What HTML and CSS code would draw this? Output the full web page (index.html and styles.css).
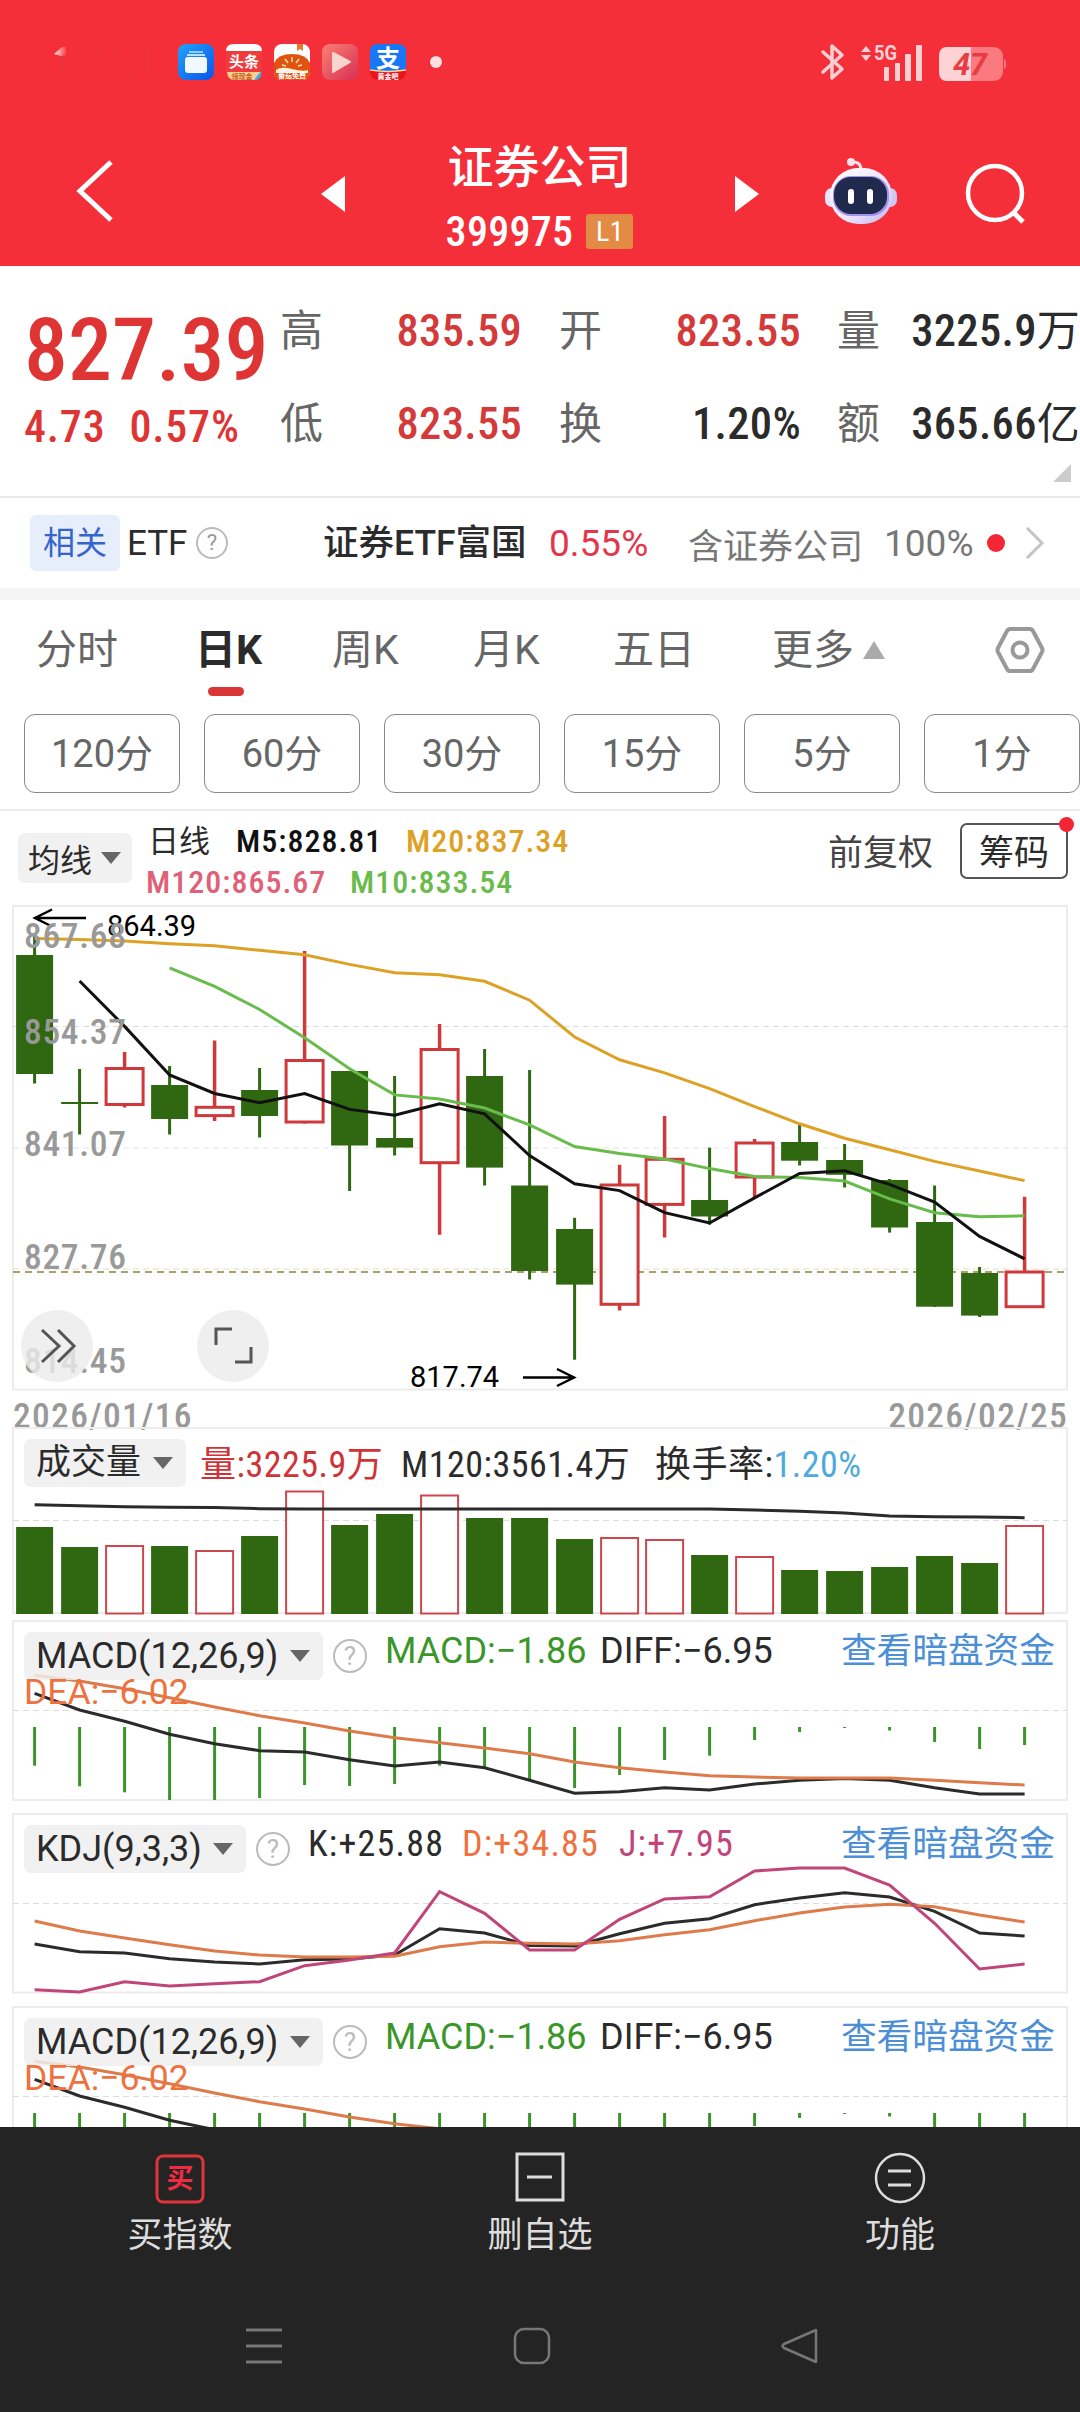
FILE: index.html
```html
<!DOCTYPE html>
<html lang="zh-CN">
<head>
    <meta charset="UTF-8">
    <meta name="viewport" content="width=device-width, initial-scale=1.0">
    <title>证券公司 399975</title>
    <link rel="stylesheet" href="styles.css">
</head>
<body>
    <header class="header">
        <div class="status">
            <svg class="clock" width="110" height="40" viewBox="0 0 110 40"><defs><linearGradient id="fade"><stop offset="0" stop-color="#fff" stop-opacity=".9"/><stop offset="1" stop-color="#fff" stop-opacity=".1"/></linearGradient></defs><path d="M0 12L8 5H12V13L7 14Z" fill="url(#fade)"/><path d="M9 12V34M23 7V10M40 5L48 12M61 5V10M70 33H80M86 5L94 9V30" stroke="#c94a50" stroke-width="2" fill="none" opacity=".3"/></svg>
            <div class="apps">
                <svg viewBox="0 0 36 36"><defs><linearGradient id="blue" x1="0" y1="0" x2="1" y2="1"><stop offset="0" stop-color="#20a2fb"/><stop offset="1" stop-color="#0b54e8"/></linearGradient></defs><rect width="36" height="36" rx="8" fill="url(#blue)"/><path d="M11 8H25" stroke="#8fd0ff" stroke-width="2"/><path d="M9 11H27" stroke="#b9e2ff" stroke-width="2"/><rect x="7" y="13" width="22" height="16" rx="3" fill="#f1f8ff"/></svg>
                <svg viewBox="0 0 36 36"><rect width="36" height="36" rx="8" fill="#f03b3d"/><path d="M0 7Q0 0 8 0H28Q36 0 36 7Z" fill="#fff"/><text x="18" y="23" class="app-text" font-size="15">头条</text><path d="M1 28H35Q34 36 28 36H8Q2 36 1 28Z" fill="#f8cf8c"/><path d="M28 36L35 27V31Q34 36 28 36Z" fill="#28b7e8"/><text x="16" y="34.500" text-anchor="middle" font-size="7" font-weight="700" fill="#c65a23">领现金</text></svg>
                <svg viewBox="0 0 36 36"><rect width="36" height="36" rx="8" fill="#fff"/><path d="M23 0H29V7L26 5L23 7Z" fill="#e9762c"/><path d="M0 19Q4 10 18 10T36 19V28Q36 36 28 36H8Q0 36 0 28Z" fill="#e0520f"/><path d="M2 26Q7 22 18 25T34 26V29H2Z" fill="#fff2dd"/><path d="M18 13V18M11 15L14 19M25 15L22 19M8 21L12 22M28 21L24 22" stroke="#ffe3a6" stroke-width="1.500"/><text x="18" y="34" class="app-text" font-size="7">番茄免费</text></svg>
                <svg viewBox="0 0 36 36"><defs><linearGradient id="rose" x1="0" y1="0" x2="1" y2="1"><stop offset="0" stop-color="#fb8072"/><stop offset="1" stop-color="#d72f55"/></linearGradient></defs><rect width="36" height="36" rx="8" fill="url(#rose)"/><path d="M11 9L28 18L11 28Z" fill="#fbd4cf" stroke="#fbd4cf" stroke-width="2" stroke-linejoin="round"/></svg>
                <svg viewBox="0 0 36 36"><rect width="36" height="36" rx="8" fill="#e8141e"/><path d="M0 26V8Q0 0 8 0H28Q36 0 36 8V26Q18 29 0 26Z" fill="#1777f5"/><text x="18" y="23" class="app-text" font-size="24">支</text><path d="M0 26Q18 29 36 26" fill="none" stroke="#ffd58e" stroke-width="1.500"/><text x="18" y="34.500" class="app-text" font-size="7">黄金吧</text></svg>
            </div>
            <i class="status-dot"></i>
            <svg class="signals" width="190" height="40" viewBox="0 0 190 40"><path d="M3 10L22 27L12 36V4L22 13L3 30" fill="none" stroke="#fcd0d2" stroke-width="3.500" stroke-linejoin="round" stroke-linecap="round"/><g fill="#fcd0d2"><path d="M41 10L46 4L51 10Z"/><path d="M41 13L46 19L51 13Z"/><rect x="64" y="25" width="5" height="14" rx="1"/><rect x="75" y="21" width="5" height="18" rx="1"/><rect x="85" y="12" width="6" height="27" rx="1"/><rect x="96" y="3" width="6" height="36" rx="1"/><text x="54" y="18" font-size="20" font-weight="700" textLength="23" lengthAdjust="spacingAndGlyphs">5G</text></g><rect x="119" y="5" width="64" height="34" rx="9" fill="#fa7a80"/><path d="M184 17Q186 17 186 22T184 27Z" fill="#fa7a80"/><path d="M151 5V39H127Q119 39 119 30V14Q119 5 127 5Z" fill="#fdd3d5"/><text x="133" y="33" font-size="31" font-weight="700" font-style="italic" fill="#e83c44" textLength="34">47</text></svg>
        </div>
        <div class="nav">
            <svg class="back" width="44" height="66" viewBox="0 0 44 66"><path d="M37 4L6 33L37 62" fill="none" stroke="#fff" stroke-width="5"/></svg>
            <svg class="prev" width="24" height="36" viewBox="0 0 24 36"><path d="M24 0V36L0 18Z" fill="#fff"/></svg>
            <div class="title">
                <h1>证券公司</h1>
                <div class="code"><span>399975</span><b>L1</b></div>
            </div>
            <svg class="next" width="24" height="36" viewBox="0 0 24 36"><path d="M0 0V36L24 18Z" fill="#fff"/></svg>
            <svg class="robot" width="74" height="68" viewBox="0 0 74 68"><defs><linearGradient id="shell" x1="0" y1="0" x2="1" y2="1"><stop offset="0" stop-color="#fff"/><stop offset=".6" stop-color="#efe3fb"/><stop offset="1" stop-color="#b9b6f2"/></linearGradient></defs><path d="M27 5Q37 4 37 13" fill="none" stroke="#fbe3ec" stroke-width="3"/><circle cx="27" cy="5" r="4" fill="#fbe3ec"/><rect x="1" y="31" width="14" height="19" rx="7" fill="#e9e4fb"/><rect x="59" y="31" width="14" height="19" rx="7" fill="#cfc8f5"/><rect x="6" y="11" width="62" height="56" rx="28" fill="url(#shell)"/><rect x="9" y="19" width="56" height="40" rx="18" fill="#a493ee"/><rect x="10" y="20" width="53" height="37" rx="17" fill="#1f2a4d"/><rect x="24" y="32" width="6" height="15" rx="3" fill="#fff"/><rect x="43" y="32" width="6" height="15" rx="3" fill="#fff"/></svg>
            <svg class="search" width="64" height="64" viewBox="0 0 64 64"><circle cx="30" cy="31" r="27" fill="none" stroke="#fff" stroke-width="4.500"/><path d="M48 50L58 60" stroke="#fff" stroke-width="5"/></svg>
        </div>
    </header>

    <section class="quote">
        <div class="price">
            <strong>827.39</strong>
            <p><span>4.73</span><span>0.57%</span></p>
        </div>
        <dl class="stats">
            <dt>高</dt><dd class="up">835.59</dd><dt>开</dt><dd class="up">823.55</dd><dt>量</dt><dd>3225.9<em>万</em></dd>
            <dt>低</dt><dd class="up">823.55</dd><dt>换</dt><dd>1.20%</dd><dt>额</dt><dd>365.66<em>亿</em></dd>
        </dl>
        <i class="corner"></i>
    </section>

    <section class="etf">
        <span class="tag">相关</span>
        <span class="etf-label">ETF</span>
        <i class="help small">?</i>
        <span class="etf-name">证券ETF富国</span>
        <span class="etf-rate">0.55%</span>
        <span class="etf-hold">含证券公司</span>
        <span class="etf-pct">100%</span>
        <i class="dot"></i>
        <svg width="20" height="34" viewBox="0 0 20 34"><path d="M2 2L17 17L2 32" fill="none" stroke="#c4c4c4" stroke-width="3"/></svg>
    </section>

    <nav class="tabs">
        <span>分时</span>
        <span class="active">日K</span>
        <span>周K</span>
        <span>月K</span>
        <span>五日</span>
        <span class="more">更多<i></i></span>
        <svg width="50" height="48" viewBox="0 0 50 48"><path d="M15 3H35Q37 3 38 5L47 22Q48 24 47 26L38 43Q37 45 35 45H15Q13 45 12 43L3 26Q2 24 3 22L12 5Q13 3 15 3Z" fill="none" stroke="#999" stroke-width="4"/><circle cx="25" cy="24" r="7.500" fill="none" stroke="#999" stroke-width="4"/></svg>
    </nav>

    <div class="periods">
        <span>120分</span><span>60分</span><span>30分</span><span>15分</span><span>5分</span><span>1分</span>
    </div>

    <section class="ma">
        <span class="chip">均线<i></i></span>
        <div class="ma-values">
            <div><span class="day">日线</span><span class="m5">M5:828.81</span><span class="m20">M20:837.34</span></div>
            <div><span class="m120">M120:865.67</span><span class="m10">M10:833.54</span></div>
        </div>
        <span class="adjust">前复权</span>
        <span class="chips-btn">筹码<i></i></span>
    </section>

    <svg id="kline" width="1080" height="486" viewBox="0 905 1080 486"></svg>
    <div class="dates"><span>2026/01/16</span><span>2026/02/25</span></div>

    <section class="panel volume">
        <svg id="volume" width="1080" height="188" viewBox="0 1427 1080 188"></svg>
        <div class="panel-head">
            <span class="chip">成交量<i></i></span>
            <span class="vol-now">量:3225.9万</span>
            <span class="vol-ma">M120:3561.4万</span>
            <span class="vol-rate">换手率:<em>1.20%</em></span>
        </div>
    </section>

    <section class="panel macd">
        <svg class="macd-chart" width="1080" height="181" viewBox="0 1620 1080 181"></svg>
        <div class="panel-head">
            <span class="chip">MACD(12,26,9)<i></i></span>
            <i class="help">?</i>
            <span class="macd-val">MACD:−1.86</span>
            <span class="diff-val">DIFF:−6.95</span>
            <a>查看暗盘资金</a>
        </div>
        <span class="dea-val">DEA:−6.02</span>
    </section>

    <section class="panel kdj">
        <svg id="kdj" width="1080" height="181" viewBox="0 1813 1080 181"></svg>
        <div class="panel-head">
            <span class="chip">KDJ(9,3,3)<i></i></span>
            <i class="help">?</i>
            <span class="k-val">K:+25.88</span>
            <span class="d-val">D:+34.85</span>
            <span class="j-val">J:+7.95</span>
            <a>查看暗盘资金</a>
        </div>
    </section>

    <section class="panel macd">
        <svg class="macd-chart" width="1080" height="181" viewBox="0 1620 1080 181"></svg>
        <div class="panel-head">
            <span class="chip">MACD(12,26,9)<i></i></span>
            <i class="help">?</i>
            <span class="macd-val">MACD:−1.86</span>
            <span class="diff-val">DIFF:−6.95</span>
            <a>查看暗盘资金</a>
        </div>
        <span class="dea-val">DEA:−6.02</span>
    </section>

    <footer class="footer">
        <div class="actions">
            <div class="action">
                <svg width="52" height="52" viewBox="0 0 52 52"><rect x="3" y="4" width="46" height="46" rx="6" fill="none" stroke="#e0343c" stroke-width="3"/><text x="26" y="36" text-anchor="middle" font-size="27" font-weight="700" fill="#f02c43">买</text></svg>
                <span>买指数</span>
            </div>
            <div class="action">
                <svg width="52" height="52" viewBox="0 0 52 52"><rect x="3" y="2" width="46" height="46" fill="none" stroke="#ddd" stroke-width="3"/><path d="M13 25H38" stroke="#ddd" stroke-width="3"/></svg>
                <span>删自选</span>
            </div>
            <div class="action">
                <svg width="52" height="52" viewBox="0 0 52 52"><circle cx="26" cy="26" r="24" fill="none" stroke="#ddd" stroke-width="2.500"/><path d="M14 19H37M14 33H37" stroke="#ddd" stroke-width="3"/></svg>
                <span>功能</span>
            </div>
        </div>
        <div class="system">
            <svg width="40" height="40" viewBox="0 0 40 40"><path d="M2 4H38M2 20H38M2 36H38" stroke="#777" stroke-width="3"/></svg>
            <svg width="40" height="40" viewBox="0 0 40 40"><rect x="4" y="3" width="34" height="34" rx="9" fill="none" stroke="#777" stroke-width="2.500"/></svg>
            <svg width="40" height="40" viewBox="0 0 40 40"><path d="M38 4V36L6 22Q3 20 6 18Z" fill="none" stroke="#777" stroke-width="2.500" stroke-linejoin="round"/></svg>
        </div>
    </footer>

    <script src="charts.js"></script>
</body>
</html>
```

FILE: charts.js
```js
const GREEN = '#306812';
const RED = '#d0393c';
const x = i => 34.6 + 45 * i;

function line(values, color, start = 0, width = 3) {
    const points = values.map((v, i) => x(i + start).toFixed(1) + ',' + v).join(' ');
    return `<polyline points="${points}" fill="none" stroke="${color}" stroke-width="${width}"/>`;
}

function frame(top, bottom) {
    return `<rect x="13" y="${top}" width="1054" height="${bottom - top}" fill="none" stroke="#ececec" stroke-width="2"/>`;
}

function grid(y, color = '#dcdcdc', dash = '6 4', width = 1) {
    return `<line x1="13" x2="1067" y1="${y}" y2="${y}" stroke="${color}" stroke-width="${width}" stroke-dasharray="${dash}"/>`;
}

// [涨跌, 最高, 最低, 实体上沿, 实体下沿]
const candles = [
    [0, 936, 1083.5, 955, 1074], [0, 1069, 1134.5, 1102, 1104], [1, 1052, 1107.5, 1068.5, 1104.5],
    [0, 1066, 1134.5, 1085, 1119], [1, 1040.5, 1121, 1107.3, 1115.6], [0, 1068, 1137.5, 1090, 1116],
    [1, 951, 1123.5, 1060.5, 1122], [0, 1071, 1191, 1071, 1145.5], [0, 1076, 1155.5, 1138, 1147.6],
    [1, 1024, 1234.7, 1049.5, 1162.7], [0, 1049, 1185.5, 1076, 1167.6], [0, 1070, 1279.5, 1185.5, 1271],
    [0, 1217.8, 1359.7, 1229, 1284.6], [1, 1164.8, 1310.5, 1185, 1304.3], [1, 1116, 1237.5, 1159.3, 1204.4],
    [0, 1147.6, 1224.7, 1200, 1216.5], [1, 1139, 1198, 1143, 1177], [0, 1124.5, 1165.5, 1142, 1160.7],
    [0, 1144, 1187.5, 1160, 1174.8], [0, 1179, 1232.6, 1180, 1227.5], [0, 1185.5, 1307, 1222, 1306.7],
    [0, 1267, 1317, 1273, 1315.6], [1, 1196.8, 1306.7, 1272, 1306.7]
];
const ma20 = [938.6, 939.6, 941, 943.7, 945.8, 950.3, 954.8, 964.4, 972.7, 974.7, 981.3, 1000.2, 1037, 1059.8, 1072.9, 1088.7, 1106.6, 1123.8, 1138.3, 1149.7, 1161.4, 1171, 1180.6];
const ma5 = [981, 1026.4, 1075, 1093.5, 1102.8, 1093.5, 1109.4, 1115.2, 1103.9, 1113.8, 1155.5, 1183.7, 1190.6, 1212.7, 1223, 1197.9, 1173.4, 1170.7, 1184.4, 1202, 1236.4, 1258.8];
const ma10 = [967.8, 986.4, 1009.5, 1037.7, 1068.7, 1094.9, 1099, 1108, 1124.9, 1146.6, 1153.4, 1159, 1168.6, 1176.5, 1177.5, 1181, 1198.9, 1212.7, 1216.8, 1215.8];

function drawKline() {
    let s = frame(906, 1389.5) + grid(1026.5) + grid(1148, '#e4e4e4') + grid(1269, '#e6dfc4');
    s += grid(1272, '#aaa06c', '7 5', 2);
    candles.forEach(([up, high, low, top, bottom], i) => {
        const cx = x(i);
        const color = up ? RED : GREEN;
        if (up) {
            s += `<path d="M${cx} ${high}V${top}M${cx} ${bottom}V${low}" stroke="${color}" stroke-width="3.500"/>`;
            s += `<rect x="${cx - 18.5}" y="${top}" width="37" height="${bottom - top}" fill="#fff" stroke="${color}" stroke-width="3"/>`;
        } else {
            s += `<path d="M${cx} ${high}V${low}" stroke="${color}" stroke-width="3"/>`;
            s += `<rect x="${cx - 18.5}" y="${top}" width="37" height="${bottom - top}" fill="${color}"/>`;
        }
    });
    s += line(ma20, '#dda125') + line(ma10, '#69bb4b', 3) + line(ma5, '#111', 1);
    s += '<path d="M86 918H35M52 909.500L35 918L52 926.500M523 1377.500H574M557 1369L574 1377.500L557 1386" fill="none" stroke="#000" stroke-width="2.500"/>';
    s += '<text x="107" y="936" class="mark">864.39</text><text x="410" y="1387" class="mark">817.74</text>';
    [['867.68', 948], ['854.37', 1044], ['841.07', 1156], ['827.76', 1269], ['814.45', 1373]].forEach(([t, y]) => {
        s += `<text x="24" y="${y}" class="axis" textLength="102" lengthAdjust="spacing">${t}</text>`;
    });
    s += '<g fill="#ebebeb" fill-opacity=".8"><circle cx="57" cy="1346" r="36"/><circle cx="233" cy="1346" r="36"/></g>';
    s += '<path d="M42 1330L59 1346L42 1362M58 1330L74 1346L58 1362M216 1345V1329H232M251 1347V1362H235" fill="none" stroke="#555" stroke-width="3"/>';
    document.getElementById('kline').innerHTML = s;
}

const volumes = [1527, 1547, 1546, 1546, 1551, 1536, 1491.5, 1525, 1514, 1495.5, 1518, 1518, 1539, 1538, 1540, 1555, 1557, 1570, 1571, 1567, 1556, 1563, 1526];
const volumeMa = [1504.7, 1505.7, 1506.7, 1507.3, 1507.5, 1508.7, 1509, 1509, 1509, 1509, 1509, 1509, 1509, 1509, 1509, 1509, 1510, 1511.3, 1513, 1516, 1516.7, 1517, 1517.7];

function drawVolume() {
    let s = frame(1428, 1613) + grid(1520.5);
    volumes.forEach((top, i) => {
        const cx = x(i);
        if (candles[i][0]) {
            s += `<rect x="${cx - 18.5}" y="${top}" width="37" height="${1613.5 - top}" fill="#fff" stroke="#cb494e" stroke-width="2"/>`;
        } else {
            s += `<rect x="${cx - 18.5}" y="${top}" width="37" height="${1614 - top}" fill="${GREEN}"/>`;
        }
    });
    document.getElementById('volume').innerHTML = s + line(volumeMa, '#2b2b2b');
}

const macdBars = [1765.7, 1786.3, 1792.3, 1800, 1800, 1798, 1785, 1786, 1784, 1765.7, 1767, 1780, 1788, 1775, 1760, 1755.7, 1740, 1732, 1728, 1730.5, 1742, 1749, 1745];
const diff = [1693.3, 1710, 1721.3, 1734.3, 1743.7, 1750.7, 1752, 1759.7, 1766, 1762, 1767.7, 1780.3, 1793.3, 1791.7, 1787.7, 1790, 1784, 1780.3, 1778.5, 1780.3, 1787.7, 1794, 1794];
const dea = [1675.3, 1681, 1688.7, 1697.7, 1707, 1715.7, 1723, 1731, 1737.7, 1742.7, 1748, 1753.7, 1762, 1767.7, 1772, 1775.7, 1777, 1778, 1778, 1778, 1780.3, 1782.7, 1785];

function drawMacd(svg) {
    let s = frame(1621, 1800) + grid(1710.5);
    macdBars.forEach((y, i) => {
        s += `<path d="M${x(i)} 1727V${y}" stroke="#3b942b" stroke-width="3"/>`;
    });
    svg.innerHTML = s + line(diff, '#2b2b2b') + line(dea, '#dd7b4b');
}

const k = [1944, 1951.7, 1953, 1958.7, 1962, 1964, 1959.7, 1959, 1955, 1928.7, 1933, 1945.5, 1946, 1933.7, 1923.3, 1918.7, 1904.7, 1898, 1892.7, 1897, 1911.3, 1933, 1936];
const d = [1921, 1931, 1938, 1944.7, 1951, 1955, 1957, 1957, 1956.3, 1946.7, 1942, 1943.3, 1944, 1940.7, 1934.7, 1929.7, 1920.7, 1913, 1907, 1904.3, 1906.7, 1915, 1922];
const j = [1989.7, 1992, 1981.7, 1986, 1983.7, 1981.7, 1965.7, 1960, 1953, 1891.7, 1913.3, 1950, 1950, 1919.3, 1899, 1896.7, 1871, 1868, 1868, 1885, 1923.3, 1969, 1964];

drawKline();
drawVolume();
document.querySelectorAll('.macd-chart').forEach(drawMacd);
document.getElementById('kdj').innerHTML = frame(1814, 1992.5) + grid(1903.5) + line(k, '#2b2b2b') + line(d, '#dd7b4b') + line(j, '#c0467a');
```

FILE: styles.css
```css
* {
    box-sizing: border-box;
}
body {
    margin: 0;
    width: 1080px;
    height: 2412px;
    overflow: hidden;
    display: flex;
    flex-direction: column;
    background: #fff;
    color: #2b2b2b;
    font-family: Roboto, "Noto Sans CJK SC", sans-serif;
    white-space: nowrap;
}
svg {
    display: block;
    flex: none;
}
span {
    flex: none;
}
i, em {
    font-style: normal;
}
h1, p, dl, dd {
    margin: 0;
}

/* 顶部 */
.header {
    flex: none;
    height: 266px;
    background: #f42f39;
    color: #fff;
}
.status {
    display: flex;
    align-items: center;
    height: 82px;
    padding: 42px 70px 0 54px;
}
.apps {
    display: flex;
    gap: 12px;
    margin-left: 14px;
}
.apps svg {
    width: 36px;
    height: 36px;
}
.app-text {
    font-weight: 700;
    fill: #fff;
    text-anchor: middle;
}
.status-dot {
    width: 12px;
    height: 12px;
    margin-left: 24px;
    border-radius: 50%;
    background: #fde0e0;
}
.signals {
    margin-left: auto;
}
.nav {
    display: flex;
    align-items: center;
    height: 184px;
    padding: 40px 0 0 74px;
}
.back {
    margin-top: -6px;
}
.prev {
    margin-left: 203px;
}
.title {
    width: 390px;
    height: 125px;
    padding-right: 1px;
    display: flex;
    flex-direction: column;
    align-items: center;
}
.title h1 {
    font-size: 46px;
    line-height: 70px;
    font-weight: 500;
}
.code {
    display: flex;
    align-items: center;
    gap: 13px;
    font-size: 42px;
    line-height: 60px;
    font-weight: 500;
    font-stretch: 87.5%;
    letter-spacing: .3px;
}
.code b {
    width: 47px;
    height: 35px;
    border-radius: 3px;
    background: #e28b45;
    font-size: 28px;
    line-height: 35px;
    font-weight: 400;
    text-align: center;
}
.robot {
    margin: -6px 0 0 65px;
}
.search {
    margin-left: 67px;
}

/* 行情 */
.quote {
    position: relative;
    flex: none;
    display: flex;
    height: 232px;
    border-bottom: 2px solid #ebebeb;
    font-stretch: 87.5%;
}
.price {
    width: 280px;
    padding: 32px 0 0 24px;
    color: #df3434;
}
.price strong {
    display: block;
    font-size: 88px;
    line-height: 104px;
    font-weight: 500;
}
.price p {
    display: flex;
    gap: 24px;
    font-size: 44px;
    line-height: 50px;
    font-weight: 500;
    letter-spacing: .8px;
}
.stats {
    display: grid;
    grid-template-columns: 44px 198px 82px 197px 74px 205px;
    grid-auto-rows: 93px;
    padding-top: 19px;
    line-height: 93px;
}
.stats dt {
    font-size: 43px;
    color: #666;
}
.stats dt:nth-of-type(3n+2) {
    padding-left: 37px;
}
.stats dt:nth-of-type(3n) {
    padding-left: 36px;
}
.stats dd {
    font-size: 44.5px;
    font-weight: 500;
    text-align: right;
    letter-spacing: .3px;
}
.stats em {
    font-size: 43px;
    font-weight: 400;
}
.stats .up {
    color: #d53a3a;
}
.corner {
    position: absolute;
    right: 9px;
    bottom: 14px;
    border: 9px solid transparent;
    border-right-color: #ccc;
    border-bottom-color: #ccc;
}

/* 相关ETF */
.etf {
    flex: none;
    display: grid;
    grid-template-columns: 97px 69px 127px 226px 139px 196px 103px 38px 20px;
    align-items: center;
    height: 102px;
    padding-left: 30px;
    border-bottom: 12px solid #f5f5f5;
    font-size: 35px;
}
.tag {
    width: 90px;
    height: 56px;
    border-radius: 6px;
    background: #e6eefb;
    color: #3763cf;
    font-size: 32px;
    line-height: 56px;
    text-align: center;
}
.etf-name {
    font-size: 35.5px;
    line-height: 50px;
    font-weight: 500;
}
.etf-rate {
    color: #e2364f;
    font-size: 37px;
}
.etf-hold, .etf-pct {
    color: #777;
}
.etf-pct {
    font-size: 37px;
}
.help {
    flex: none;
    width: 34px;
    height: 34px;
    border: 2.5px solid #bbb;
    border-radius: 50%;
    color: #bbb;
    font-size: 26px;
    line-height: 30px;
    text-align: center;
}
.help.small {
    width: 32px;
    height: 32px;
    border-width: 2px;
    color: #999;
    font-size: 22px;
    line-height: 28px;
}
.dot {
    width: 18px;
    height: 18px;
    border-radius: 50%;
    background: #f42534;
}

/* 周期 */
.tabs {
    flex: none;
    display: grid;
    grid-template-columns: 159px 137px 141px 140px 159px 223px 50px;
    align-items: center;
    height: 100px;
    padding-left: 36px;
    color: #666;
    font-size: 41px;
    line-height: 60px;
}
.tabs .active {
    position: relative;
    color: #2b2b2b;
    font-weight: 700;
}
.tabs .active::after {
    content: "";
    position: absolute;
    left: 13px;
    top: 67px;
    width: 36px;
    height: 9px;
    border-radius: 5px;
    background: #d93636;
}
.more {
    display: flex;
    align-items: center;
}
.more i {
    margin-left: 9px;
    border: 11px solid transparent;
    border-bottom: 18px solid #aaa;
    border-top: 0;
}
.periods {
    flex: none;
    display: flex;
    gap: 24px;
    height: 111px;
    padding: 14px 0 0 24px;
    border-bottom: 2px solid #ebebeb;
}
.periods span {
    width: 156px;
    height: 79px;
    border: 1.5px solid #888;
    border-radius: 11px;
    color: #666;
    font-size: 38px;
    line-height: 79px;
    text-align: center;
}

/* 均线 */
.chip {
    display: flex;
    align-items: center;
    justify-content: space-between;
    height: 48px;
    padding: 0 13px 0 12px;
    border-radius: 7px;
    background: rgba(239, 239, 239, .85);
}
.chip i {
    border: 10px solid transparent;
    border-top: 12px solid #666;
    border-bottom: 0;
}
.ma {
    flex: none;
    display: flex;
    height: 94px;
    padding: 0 12px 0 18px;
}
.ma .chip {
    width: 114px;
    height: 50px;
    margin-top: 22px;
    padding: 0 11px 0 10px;
    font-size: 32px;
}
.ma-values {
    display: grid;
    grid-template-rows: 41px 41px;
    width: 696px;
    padding: 10px 0 0 14px;
    font-size: 32px;
    line-height: 41px;
    font-weight: 500;
    font-stretch: 87.5%;
    letter-spacing: 1px;
}
.ma-values div {
    display: flex;
}
.ma-values .day {
    width: 90px;
    padding-left: 2px;
    font-size: 31px;
    font-weight: 400;
    letter-spacing: 0;
}
.m5 {
    width: 170px;
    color: #111;
}
.m20 {
    color: #dda125;
}
.m120 {
    width: 204px;
    color: #de6178;
}
.m10 {
    color: #69bb4b;
}
.adjust {
    font-size: 35px;
    line-height: 86px;
    color: #444;
}
.chips-btn {
    position: relative;
    width: 108px;
    height: 56px;
    margin: 12px 0 0 auto;
    border: 2px solid #555;
    border-radius: 7px;
    font-size: 35px;
    line-height: 57px;
    text-align: center;
}
.chips-btn i {
    position: absolute;
    top: -8px;
    right: -8px;
    width: 15px;
    height: 15px;
    border-radius: 50%;
    background: #f42534;
}

/* 图表 */
.mark {
    font-size: 29px;
}
.axis {
    font-size: 35.5px;
    font-weight: 500;
    font-stretch: 87.5%;
    fill: #999;
}
.dates {
    flex: none;
    display: flex;
    justify-content: space-between;
    height: 36px;
    padding: 0 12px 0 13px;
    color: #999;
    font-size: 35.5px;
    line-height: 50px;
    font-weight: 500;
    font-stretch: 87.5%;
    letter-spacing: 1.3px;
}
.panel {
    flex: none;
    display: grid;
    height: 181px;
    margin-bottom: 12px;
}
.panel > * {
    grid-area: 1 / 1;
}
.panel-head {
    display: flex;
    height: 60px;
    padding: 7px 25px 0 24px;
    font-size: 36px;
    line-height: 48px;
}
.panel-head .chip {
    margin-top: 5px;
    line-height: 50px;
}
.panel-head .help {
    margin: 12px 18px 0 10px;
}
.panel-head a {
    margin-left: auto;
    color: #4d8fd6;
    font-size: 35.7px;
}
.volume {
    height: 188px;
    margin-bottom: 5px;
}
.volume .panel-head {
    padding-top: 14px;
    font-stretch: 87.5%;
    letter-spacing: .5px;
}
.volume .chip {
    width: 162px;
    margin: -2px 14px 0 0;
    font-size: 35px;
    letter-spacing: 0;
}
.vol-now {
    width: 201px;
    color: #cf3338;
}
.vol-ma {
    width: 254px;
}
.vol-rate em {
    color: #4ea9dc;
}
.macd .chip {
    width: 299px;
}
.macd-val {
    width: 215px;
    color: #3b962a;
}
.dea-val {
    margin: 52px 0 0 24px;
    color: #ed7240;
    font-size: 35.5px;
    line-height: 40px;
}
.kdj .chip {
    width: 222px;
}
.k-val, .d-val, .j-val {
    font-stretch: 87.5%;
    letter-spacing: 1.2px;
}
.k-val {
    width: 154px;
}
.d-val {
    width: 157px;
    color: #ed7240;
}
.j-val {
    color: #c0467a;
}

/* 底部 */
.footer {
    position: absolute;
    left: 0;
    top: 2127px;
    width: 1080px;
    height: 285px;
    background: #242424;
}
.actions {
    display: grid;
    grid-template-columns: repeat(3, 1fr);
    padding-top: 25px;
    color: #ddd;
    font-size: 35px;
    line-height: 64px;
}
.action {
    display: flex;
    flex-direction: column;
    align-items: center;
}
.system {
    display: flex;
    gap: 227px;
    padding: 58px 0 0 244px;
}
```
